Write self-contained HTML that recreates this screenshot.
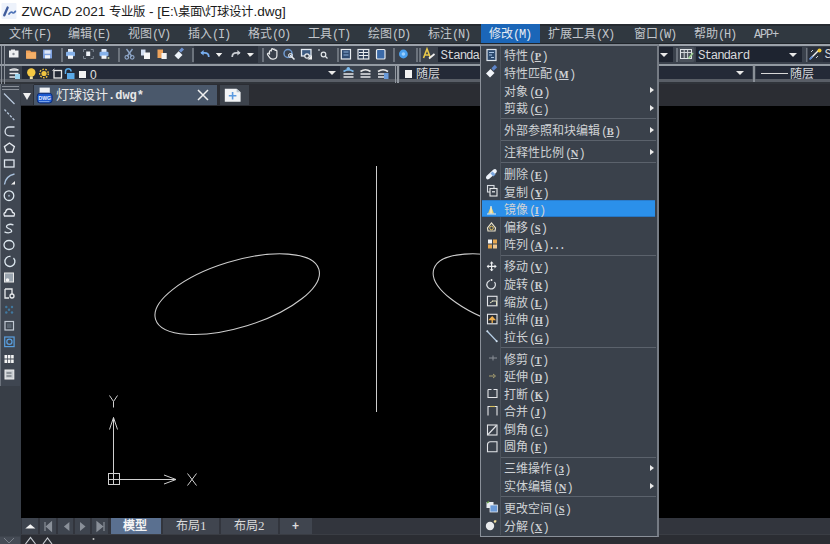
<!DOCTYPE html>
<html lang="zh-CN"><head><meta charset="utf-8"><style>
*{margin:0;padding:0;box-sizing:border-box}
html,body{width:830px;height:544px;overflow:hidden;background:#000;font-family:"Liberation Sans",sans-serif}
.a{position:absolute}
.mi{position:absolute;top:27px;font-size:12px;line-height:14px;color:#c2c6cb;white-space:nowrap}
.m{font-family:"Liberation Mono",monospace;font-size:12px;letter-spacing:-1.2px}
.it{position:absolute;left:503.5px;font-size:12px;line-height:14px;color:#cfd2d5;white-space:nowrap}
.u{text-decoration:underline;text-underline-offset:1px}
.it .m{margin-left:1.5px;letter-spacing:-1.8px}
.it .u{font-family:"Liberation Serif",serif;font-weight:bold;font-size:10.5px;letter-spacing:0;margin:0 0.3px}
.sep{position:absolute;left:501px;width:155px;height:1px;background:#5b626c}
.arr{position:absolute;left:650px;width:0;height:0;border-top:3.6px solid transparent;border-bottom:3.6px solid transparent;border-left:4.6px solid #ececec}
svg{position:absolute;overflow:visible}
</style></head><body>
<div class="a" style="left:0px;top:0px;width:830px;height:24px;background:#ffffff;"></div>
<svg style="left:0;top:0" width="24" height="24"><rect x="1.5" y="3" width="15" height="16" rx="1" fill="#edf2fb"/><path d="M4.3 15.3 L7.6 7.6" stroke="#3f5c9c" stroke-width="2.4" stroke-linecap="round"/><path d="M9 14 q2 -2.8 3.6 -1.3 q1.2 1 2.8 -1.4" stroke="#4d72b6" stroke-width="1.7" fill="none" stroke-linecap="round"/></svg>
<div class="a" style="left:21.5px;top:4px;font-size:13.6px;line-height:16px;color:#1a1a1a;white-space:nowrap">ZWCAD 2021 <span style="font-size:12.4px">专业版</span> - [E:\<span style="font-size:12.4px">桌面</span>\<span style="font-size:12.4px">灯球设计</span>.dwg]</div>
<div class="a" style="left:0px;top:24px;width:830px;height:20px;background:#303840;"></div>
<div class="a" style="left:0px;top:24px;width:830px;height:1.5px;background:#262b31;"></div>
<div class="a" style="left:0px;top:43px;width:830px;height:1px;background:#20252b;"></div>
<div class="a" style="left:480.5px;top:24.4px;width:59px;height:18.8px;background:#1b66b8;"></div>
<div class="mi" style="left:9px">文件<span class="m">(F)</span></div>
<div class="mi" style="left:68px">编辑<span class="m">(E)</span></div>
<div class="mi" style="left:128px">视图<span class="m">(V)</span></div>
<div class="mi" style="left:188px">插入<span class="m">(I)</span></div>
<div class="mi" style="left:248px">格式<span class="m">(O)</span></div>
<div class="mi" style="left:308px">工具<span class="m">(T)</span></div>
<div class="mi" style="left:368px">绘图<span class="m">(D)</span></div>
<div class="mi" style="left:428px">标注<span class="m">(N)</span></div>
<div class="mi" style="left:489px;color:#e6ebf2">修改<span class="m">(M)</span></div>
<div class="mi" style="left:548px">扩展工具<span class="m">(X)</span></div>
<div class="mi" style="left:634px">窗口<span class="m">(W)</span></div>
<div class="mi" style="left:694px">帮助<span class="m">(H)</span></div>
<div class="mi" style="left:754px"><span class="m">APP+</span></div>
<div class="a" style="left:0px;top:44px;width:830px;height:2px;background:#9ca2aa;"></div>
<div class="a" style="left:0px;top:46px;width:830px;height:18px;background:#3a414c;"></div>
<div class="a" style="left:0px;top:64px;width:830px;height:2px;background:#939aa2;"></div>
<div class="a" style="left:0px;top:66px;width:830px;height:14px;background:#3a414c;"></div>
<div class="a" style="left:0px;top:79.3px;width:830px;height:2.7px;background:#595e66;"></div>
<div class="a" style="left:0px;top:82px;width:830px;height:2px;background:#30343a;"></div>
<div class="a" style="left:1px;top:46px;width:1px;height:38px;background:#8c929b;"></div>
<div class="a" style="left:4px;top:46px;width:1px;height:38px;background:#8c929b;"></div>
<div class="a" style="left:61px;top:48px;width:2.4px;height:14px;background:#6c737d;"></div>
<div class="a" style="left:118px;top:48px;width:2.4px;height:14px;background:#6c737d;"></div>
<div class="a" style="left:192px;top:48px;width:2.4px;height:14px;background:#6c737d;"></div>
<div class="a" style="left:262px;top:48px;width:2.4px;height:14px;background:#6c737d;"></div>
<div class="a" style="left:337px;top:48px;width:2.4px;height:14px;background:#6c737d;"></div>
<div class="a" style="left:393px;top:48px;width:2.4px;height:14px;background:#6c737d;"></div>
<div class="a" style="left:416px;top:48px;width:2.4px;height:14px;background:#6c737d;"></div>
<div class="a" style="left:419px;top:48px;width:2.4px;height:14px;background:#6c737d;"></div>
<div class="a" style="left:676px;top:48px;width:2.4px;height:14px;background:#6c737d;"></div>
<div class="a" style="left:806px;top:48px;width:2.4px;height:14px;background:#6c737d;"></div>
<div class="a" style="left:194px;top:46px;width:64px;height:17px;background:#2a303b;"></div>
<div class="a" style="left:438px;top:47px;width:42px;height:15px;background:#1e2430;"></div>
<div class="a" style="left:440.5px;top:49px;font-family:'Liberation Mono',monospace;font-size:12.5px;letter-spacing:-1.1px;line-height:15px;color:#d6d8db">Standa</div>
<div class="a" style="left:659px;top:47px;width:14px;height:15px;background:#1e2430;"></div>
<div class="a" style="left:696px;top:47px;width:106px;height:15px;background:#1e2430;"></div>
<div class="a" style="left:698px;top:49px;font-family:'Liberation Mono',monospace;font-size:12.5px;letter-spacing:-1.1px;line-height:15px;color:#d6d8db">Standard</div>
<div class="a" style="left:659.5px;top:52.5px;width:0;height:0;border-left:4.0px solid transparent;border-right:4.0px solid transparent;border-top:4px solid #e8e8e8"></div>
<div class="a" style="left:789px;top:52.5px;width:0;height:0;border-left:4.0px solid transparent;border-right:4.0px solid transparent;border-top:4px solid #e8e8e8"></div>
<div class="a" style="left:215.5px;top:52.5px;width:0;height:0;border-left:3.5px solid transparent;border-right:3.5px solid transparent;border-top:4px solid #e8e8e8"></div>
<div class="a" style="left:247px;top:52.5px;width:0;height:0;border-left:3.5px solid transparent;border-right:3.5px solid transparent;border-top:4px solid #e8e8e8"></div>
<div class="a" style="left:22px;top:65.5px;width:318px;height:13.8px;background:#242a37;"></div>
<div class="a" style="left:400px;top:65.5px;width:352px;height:13.8px;background:#242a37;"></div>
<div class="a" style="left:756px;top:65.5px;width:74px;height:13.8px;background:#242a37;"></div>
<div class="a" style="left:753px;top:65px;width:2px;height:17px;background:#8a9098;"></div>
<div class="a" style="left:394.5px;top:65px;width:1.5px;height:18px;background:#9298a0;"></div>
<div class="a" style="left:397.2px;top:65px;width:1.5px;height:18px;background:#9298a0;"></div>
<div class="a" style="left:327.5px;top:70.5px;width:0;height:0;border-left:4.0px solid transparent;border-right:4.0px solid transparent;border-top:4px solid #e8e8e8"></div>
<div class="a" style="left:736px;top:70.5px;width:0;height:0;border-left:4.0px solid transparent;border-right:4.0px solid transparent;border-top:4px solid #e8e8e8"></div>
<div class="a" style="left:90px;top:67.5px;font-size:12px;line-height:15px;color:#e0e0e0">0</div>
<div class="a" style="left:79px;top:71px;width:7.2px;height:7.3px;background:#f2f2f2;"></div>
<div class="a" style="left:404.5px;top:70.3px;width:7.6px;height:7.6px;background:#f2f2f2;"></div>
<div class="a" style="left:416px;top:67px;font-size:12px;line-height:15px;color:#d6d8db">随层</div>
<div class="a" style="left:761px;top:73px;width:27px;height:1.2px;background:#d8d8d8;"></div>
<div class="a" style="left:790px;top:67px;font-size:12px;line-height:15px;color:#d6d8db">随层</div>
<div class="a" style="left:0px;top:84px;width:830px;height:21.5px;background:#2b2d33;"></div>
<div class="a" style="left:21px;top:84px;width:13px;height:21px;background:#3d434d;"></div>
<div class="a" style="left:33px;top:85px;width:1px;height:20px;background:#2a2f38;"></div>
<div class="a" style="left:34px;top:85px;width:183.4px;height:20px;background:#4a586b;"></div>
<div class="a" style="left:220px;top:85px;width:29px;height:20px;background:#3d434c;"></div>
<div class="a" style="left:23px;top:92.5px;width:0;height:0;border-left:4.25px solid transparent;border-right:4.25px solid transparent;border-top:7.5px solid #f0f0f0"></div>
<div class="a" style="left:56px;top:87px;font-size:13px;line-height:16px;color:#e8e8e8;white-space:nowrap">灯球设计<span style="font-family:'Liberation Mono',monospace;font-size:12px;font-weight:bold">.dwg*</span></div>
<svg style="left:196px;top:88px" width="14" height="14"><path d="M2 2 L12 12 M12 2 L2 12" stroke="#f0f0f0" stroke-width="1.5"/></svg>
<svg style="left:0;top:0" width="60" height="110"><rect x="39.6" y="87.6" width="10.2" height="5.4" fill="#f0f2f4"/><rect x="37.2" y="93.2" width="15" height="9.8" rx="3" fill="#1d5ad0" stroke="#102c70" stroke-width="1"/><text x="38.6" y="100" font-size="6.2" font-family="Liberation Sans" font-weight="bold" fill="#e8f0ff" textLength="12.5" lengthAdjust="spacingAndGlyphs">DWG</text><path d="M39 101.6 h10.5" stroke="#9cc0f0" stroke-width="0.8"/></svg>
<svg style="left:0;top:0" width="260" height="110"><path d="M224.8 88.8 h11.8 l4 3.4 v9.5 h-15.8z" fill="#f2f4f6"/><path d="M236.6 88.8 v3.4 h4" fill="#b8c4d0"/><path d="M232.6 92 v7.6 M228.8 95.8 h7.6" stroke="#5a9ae0" stroke-width="1.6"/></svg>
<div class="a" style="left:0px;top:84px;width:21px;height:460px;background:#383e47;"></div>
<div class="a" style="left:0px;top:84px;width:20px;height:302px;background:#3f4651;"></div>
<div class="a" style="left:0px;top:84px;width:1px;height:302px;background:#6b727c;"></div>
<div class="a" style="left:2px;top:86px;width:17px;height:1px;background:#8a9099;"></div>
<div class="a" style="left:2px;top:89px;width:17px;height:1px;background:#8a9099;"></div>
<div class="a" style="left:21px;top:105.5px;width:809px;height:412.5px;background:#000;"></div>
<svg style="left:0;top:0" width="830" height="544"><ellipse cx="237.2" cy="294.2" rx="85.4" ry="33.05" transform="rotate(-17.1 237.2 294.2)" fill="none" stroke="#cdcdcd" stroke-width="1.05"/><ellipse cx="515.4" cy="294.2" rx="85.4" ry="33.05" transform="rotate(17.1 515.4 294.2)" fill="none" stroke="#cdcdcd" stroke-width="1.05"/><path d="M376.5 166 V412" stroke="#cdcdcd" stroke-width="1"/><path d="M113.5 417.5 V473.5 M119 479.5 H176 M109.5 429.5 L113.5 417.5 L117.5 429.5 M164 475 L176 479.5 L164 484" stroke="#d0d0d0" stroke-width="1" fill="none"/><rect x="108.5" y="473.5" width="11" height="11" stroke="#d0d0d0" fill="none"/><path d="M113.5 473.5 V484.5 M108.5 479.5 H119.5" stroke="#d0d0d0"/><path d="M109.5 395.5 L113.5 401.5 L117.5 395.5 M113.5 401.5 V407.5" stroke="#d0d0d0" fill="none"/><path d="M187.5 473.5 L196.5 485.5 M196.5 473.5 L187.5 485.5" stroke="#d0d0d0" fill="none"/></svg>
<div class="a" style="left:21px;top:518px;width:809px;height:16px;background:#32353d;"></div>
<div class="a" style="left:21px;top:534px;width:809px;height:1px;background:#3a3d44;"></div>
<div class="a" style="left:21px;top:535px;width:809px;height:9px;background:#2b2d33;"></div>
<div class="a" style="left:21.7px;top:518px;width:16.6px;height:16px;background:#3e444e;"></div>
<div class="a" style="left:40px;top:518px;width:15.7px;height:16px;background:#3e444e;"></div>
<div class="a" style="left:57.5px;top:518px;width:15.5px;height:16px;background:#3e444e;"></div>
<div class="a" style="left:74.8px;top:518px;width:15.2px;height:16px;background:#3e444e;"></div>
<div class="a" style="left:92px;top:518px;width:16px;height:16px;background:#3e444e;"></div>
<div class="a" style="left:110.6px;top:518px;width:50px;height:16px;background:#5a7090;"></div>
<div class="a" style="left:163px;top:518px;width:56px;height:16px;background:#40454f;"></div>
<div class="a" style="left:220.5px;top:518px;width:57.5px;height:16px;background:#40454f;"></div>
<div class="a" style="left:279.7px;top:518px;width:32px;height:16px;background:#40454f;"></div>
<div class="a" style="left:123px;top:518px;font-size:12px;line-height:16px;color:#f4f4f4;font-weight:bold">模型</div>
<div class="a" style="left:176px;top:518px;font-size:12px;line-height:16px;color:#dcdcdc">布局<span style="font-family:'Liberation Serif',serif;font-size:13px">1</span></div>
<div class="a" style="left:234px;top:518px;font-size:12px;line-height:16px;color:#dcdcdc">布局<span style="font-family:'Liberation Serif',serif;font-size:13px">2</span></div>
<div class="a" style="left:292px;top:518px;font-size:12px;line-height:16px;color:#dcdcdc;font-weight:bold">+</div>
<svg style="left:0;top:0" width="830" height="544"><path d="M25.3 528.6 L30.3 524.3 L35.4 528.6z" fill="#f4f4f4"/><path d="M45 522 v9 M51.5 522 v9 l-5 -4.5z" stroke="#8a9099" fill="#8a9099" stroke-width="1.2"/><path d="M69.4 522 v9 l-5.5 -4.5z" fill="#8a9099"/><path d="M80 522 v9 l5.5 -4.5z" fill="#8a9099"/><path d="M97 522 v9 l5.5 -4.5z M104 522 v9" stroke="#8a9099" fill="#8a9099" stroke-width="1.2"/><path d="M25.5 544 l5 -6.5 l5 6.5 M43 544 l4.5 -6 l4.5 6" stroke="#c8ccd2" stroke-width="1.2" fill="none"/><circle cx="93.5" cy="539" r="1" fill="#c0c0c0"/><rect x="0" y="536.5" width="20" height="8" fill="#454b55"/><path d="M4 538 l5 5 l5 -5" stroke="#7a8089" fill="none"/></svg>
<svg style="left:0;top:0" width="830" height="100"><rect x="9" y="50.5" width="9.5" height="7" fill="#eef0f2"/><rect x="11" y="49.5" width="4" height="1.5" fill="#eef0f2"/><circle cx="13.5" cy="54" r="1.2" fill="#8a8f98"/><path d="M26 50.5 h4 l1.2 1.3 h5 v7 h-10.2z" fill="#f0a25a"/><rect x="26.5" y="53" width="9.5" height="5.5" fill="#f5b068"/><rect x="43" y="49.6" width="9" height="8.8" fill="#7fa2e0"/><rect x="44.5" y="50.3" width="6" height="3.4" fill="#dde6f6"/><rect x="45" y="55.2" width="5" height="3.2" fill="#f2f4f8"/><rect x="68" y="49" width="5" height="3" fill="#e4ecf8"/><rect x="66" y="51.8" width="9" height="4.4" rx="1" fill="#86b2ea"/><rect x="68" y="55.5" width="5" height="3.3" fill="#f4f6f8"/><rect x="101.5" y="49" width="5" height="3" fill="#e4ecf8"/><rect x="99.5" y="51.8" width="9" height="4.4" rx="1" fill="#86b2ea"/><rect x="101.5" y="55.5" width="5" height="3.3" fill="#f4f6f8"/><circle cx="108.5" cy="58" r="1" fill="#c0c8a0"/><path d="M83.5 52 v-2.5 h2.5 M90.8 49.5 h2.5 v2.5 M93.3 56 v2.5 h-2.5 M86 58.5 h-2.5 v-2.5" stroke="#7f8894" fill="none"/><rect x="86.2" y="51.5" width="4" height="4.5" fill="#eef2f8"/><path d="M126.5 49 L132 56.5 M132.5 49 L127 56.5" stroke="#8ea6c8" stroke-width="1.3"/><circle cx="126.8" cy="57.3" r="1.8" stroke="#8ea6c8" stroke-width="1.2" fill="none"/><circle cx="132.2" cy="57.3" r="1.8" stroke="#8ea6c8" stroke-width="1.2" fill="none"/><rect x="141" y="49.5" width="4.5" height="6" fill="#d4e0f2"/><rect x="144" y="52.5" width="6" height="6.5" fill="#f6f6f6"/><rect x="157.5" y="49.5" width="5.5" height="8.5" fill="#eea35c"/><rect x="161.5" y="53" width="5.2" height="6" fill="#f4f4f4"/><path d="M174.5 55.5 l4.2 -4.2 l3.8 3.8 l-4.2 4.2 z" fill="#eef3fa"/><path d="M180 51.5 l3 -3" stroke="#6f93d0" stroke-width="3"/><path d="M208.8 57 q0 -4.2 -4.2 -4.2 h-3.6" stroke="#78aef0" stroke-width="1.7" fill="none"/><path d="M200.4 52.8 l3.2 -2.8 v5.6z" fill="#78aef0"/><path d="M232.2 57 q0 -4.2 4.2 -4.2 h3.6" stroke="#c8ccd2" stroke-width="1.7" fill="none"/><path d="M240.6 52.8 l-3.2 -2.8 v5.6z" fill="#c8ccd2"/><path d="M216 53.2 h6.3 l-3.15 2.9z M247.8 53.2 h6.3 l-3.15 2.9z" fill="#f0f0f0"/><path d="M269.5 54.5 v-3 q0 -1 1 -1 q0.8 0 0.8 1 v-1.8 q0 -1 1 -1 q0.9 0 0.9 1 v0.3 q0 -1 1 -1 q0.9 0 0.9 1 v1 q0 -0.9 0.9 -0.9 q0.9 0 0.9 1 v4.5 q0 3.5 -3.5 3.5 h-0.8 q-2.2 0 -3.3 -2 l-1.7 -2.5 q-0.5 -0.9 0.4 -1.3 q0.7 -0.3 1.2 0.4z" stroke="#e8eaec" stroke-width="1.2" fill="#3a414c"/><circle cx="288" cy="53.5" r="4" stroke="#6f9ad0" stroke-width="1.5" fill="none"/><path d="M290 55 l4.5 4.5" stroke="#e8ecf0" stroke-width="1.5"/><circle cx="290.5" cy="55.5" r="2" stroke="#e8ecf0" fill="none"/><rect x="301.5" y="49.5" width="9.5" height="6.5" stroke="#e4eaf2" stroke-width="1.3" fill="#3d5a80"/><circle cx="307" cy="56" r="2.2" stroke="#e8ecf0" stroke-width="1.2" fill="#3a414c"/><path d="M312 55 v4.5 h-4.5z" fill="#f2f2f2"/><circle cx="319" cy="50" r="1" fill="#aab0b8"/><circle cx="323.5" cy="54.5" r="2.3" stroke="#e2e6ea" stroke-width="1.2" fill="none"/><path d="M325 56 l2.5 2.5" stroke="#e2e6ea" stroke-width="1.3"/><rect x="341.3" y="49.5" width="9.2" height="9.5" stroke="#e8ecf0" stroke-width="1.2" fill="#2f4a70"/><path d="M343.5 52 h5 M343.5 55 h5" stroke="#8fb0d8"/><rect x="358" y="49.5" width="10.8" height="9.5" stroke="#e8ecf0" stroke-width="1.2" fill="#2f3f58"/><path d="M363.4 49.5 v9.5 M359 52.5 h9 M359 55.5 h9" stroke="#e8ecf0"/><rect x="376.5" y="49.5" width="8.5" height="9.5" rx="1" stroke="#e8ecf0" stroke-width="1.2" fill="#3b6aa8"/><circle cx="403.4" cy="54" r="4.4" fill="#4aa0f0"/><circle cx="403.4" cy="54" r="1.8" fill="#9ad0ff"/><path d="M423.5 58 l3.5 -9 l3.5 9 M425 55 h4" stroke="#e8c84a" stroke-width="1.6" fill="none"/><path d="M429 58.5 l5.5 -4.5" stroke="#f0f0f0" stroke-width="1.8"/><rect x="678.5" y="47" width="16" height="15" rx="2" fill="#4a515b"/><rect x="680.5" y="49.5" width="11" height="9" fill="none" stroke="#e0e4e8"/><path d="M681 52.5 h10 M684.2 50 v8 M687.6 50 v8" stroke="#d0d4d8"/><path d="M688.5 58.5 l4.5 -5.5" stroke="#9ad090" stroke-width="1.6"/><rect x="807.5" y="47" width="15.5" height="15" fill="#2a303b"/><path d="M810 59 l9 -9" stroke="#f0f0f0" stroke-width="1.4"/><circle cx="819.5" cy="50.5" r="2" fill="#f0c838"/><path d="M809.5 59.5 l3 -3" stroke="#5a8ad8" stroke-width="1.6"/><path d="M811 52 l2 -2 M816 58 l2 -2" stroke="#c8ccd0"/><rect x="823" y="47" width="7" height="15" fill="#242a37"/><text x="824.5" y="58" font-family="Liberation Mono" font-size="12.5" fill="#d6d8db">S</text><path d="M9.5 70 h9 M9.5 73.5 h9 M9.5 77 h6" stroke="#e6e8ea" stroke-width="1.6"/><rect x="15" y="74" width="5" height="5" fill="#9ad2ec"/><path d="M10 70 q4.5 -2.5 8 0" stroke="#e6e8ea" fill="none" stroke-width="1.2"/><circle cx="31.3" cy="72.5" r="4.2" fill="#f5c842"/><rect x="29.8" y="76.5" width="3" height="2.5" fill="#f0e0a0"/><circle cx="44" cy="73.5" r="2.6" fill="#f0c440"/><circle cx="44" cy="73.5" r="4.3" stroke="#f0c440" stroke-width="1.4" stroke-dasharray="1.6 1.4" fill="none"/><rect x="54" y="70.5" width="7.5" height="7.5" stroke="#e8e8e8" stroke-width="1.3" fill="none"/><path d="M52.5 70.5 l2 -1.5" stroke="#e8e8e8"/><rect x="67" y="73" width="7.5" height="6" fill="#5aaae8"/><path d="M65.5 74 v-2.5 a2.8 2.8 0 0 1 5.6 0" stroke="#5aaae8" stroke-width="1.5" fill="none"/><path d="M343.5 74 h10 M343.5 77 h10" stroke="#e6e8ea" stroke-width="1.6"/><path d="M343.5 71.5 q5 -3.5 10 0" stroke="#7ab8ec" fill="none" stroke-width="1.6"/><path d="M360.5 74 h10 M360.5 77 h10" stroke="#e6e8ea" stroke-width="1.6"/><path d="M360.5 71.5 q5 -3.5 10 0" stroke="#e8e8e8" fill="none" stroke-width="1.6"/><path d="M378 74 h10 M378 77 h10" stroke="#e6e8ea" stroke-width="1.6"/><path d="M378 71.5 q5 -3.5 10 0" stroke="#e8e8e8" fill="none" stroke-width="1.6"/><circle cx="348.3" cy="68.8" r="1.8" fill="#7ab8ec"/><rect x="384" y="73" width="4.5" height="6" fill="#6a9ad8"/></svg>
<svg style="left:0;top:0" width="30" height="400"><path d="M4 93.5 L14.5 104" stroke="#b8c8dc" stroke-width="1.3"/><path d="M4.5 109.5 L14.5 120.3" stroke="#b8c8dc" stroke-width="1.3" stroke-dasharray="2.5 1.5"/><path d="M14.5 127 h-5 a4.4 4.4 0 0 0 0 8.8 h5" stroke="#d8e0ea" stroke-width="1.3" fill="none"/><path d="M9.4 143 L14.4 146.6 L12.5 152 H6.3 L4.4 146.6 Z" stroke="#e4e8ee" stroke-width="1.3" fill="none"/><rect x="4.5" y="160" width="9.5" height="7" stroke="#dfe6ee" stroke-width="1.3" fill="none"/><path d="M4.5 184.5 Q5.5 176 14.5 174" stroke="#a8c0dc" stroke-width="1.4" fill="none"/><path d="M11 184.5 l4 -3.5 v3.5z" fill="#f0f0f0"/><circle cx="9" cy="195.7" r="4.8" stroke="#dde8f0" stroke-width="1.3" fill="none"/><circle cx="9" cy="195.7" r="1" fill="#9ab"/><path d="M4.5 216 h9.5 q1.5 -3 -1.5 -3.5 q-0.5 -3.5 -3.5 -3.5 q-3 0 -3.5 3.5 q-2.5 0.5 -1 3.5z" stroke="#e4e8ee" stroke-width="1.3" fill="none"/><path d="M13.5 225 q-3 -1.5 -6 0 q-2.5 2 1 3.5 q4 1.5 3 3.3 q-3 2 -7 0" stroke="#dde6ee" stroke-width="1.3" fill="none"/><ellipse cx="9" cy="245" rx="5" ry="4.5" stroke="#dde8f0" stroke-width="1.3" fill="none"/><path d="M13.5 258 a5 5 0 1 1 -3 -1.5" stroke="#dde8f0" stroke-width="1.3" fill="none"/><rect x="4.5" y="273" width="9" height="9" fill="#9aa4ae" stroke="#e8e8e8"/><circle cx="7.5" cy="280" r="1.8" fill="#f4f4f4"/><path d="M5 289 h7 v5 M5 289 v9 h4" stroke="#e8eaec" stroke-width="1.3" fill="none"/><circle cx="12" cy="296" r="2" stroke="#e8eaec" stroke-width="1.3" fill="none"/><g fill="#4079a0"><circle cx="6.3" cy="307" r="1.2"/><circle cx="12" cy="307" r="1.2"/><circle cx="9" cy="309.7" r="1.2"/><circle cx="6.3" cy="312.5" r="1.2"/><circle cx="12" cy="312.5" r="1.2"/></g><rect x="5" y="321.5" width="8.5" height="8.5" stroke="#c0c8d2" stroke-width="1.2" fill="none"/><rect x="7" y="323.5" width="4.5" height="4.5" fill="#5a6470"/><rect x="4.7" y="337" width="9.4" height="9.6" stroke="#5aa0e0" stroke-width="1.2" fill="none"/><circle cx="9.4" cy="341.8" r="2.6" stroke="#5aa0e0" stroke-width="1.2" fill="none"/><g fill="#f4f4f4"><rect x="4.5" y="355" width="2.6" height="3.5"/><rect x="7.8" y="355" width="2.6" height="3.5"/><rect x="11.1" y="355" width="2.6" height="3.5"/><rect x="4.5" y="359.5" width="2.6" height="3.5"/><rect x="7.8" y="359.5" width="2.6" height="3.5"/><rect x="11.1" y="359.5" width="2.6" height="3.5"/></g><rect x="5" y="370" width="8.8" height="9" fill="#c8ccd0" stroke="#f0f0f0"/><path d="M6.5 373 h5 M6.5 376 h5" stroke="#505860"/></svg>
<div class="a" style="left:480px;top:44px;width:179px;height:493px;background:#3a414b;border:1px solid #8a9099;border-top:2px solid #7f868f;border-right:2px solid #757b84"></div>
<div class="a" style="left:500px;top:46px;width:1px;height:489px;background:#4d545e;"></div>
<div class="it" style="top:49.4px">特性<span class="m">(<span class="u">P</span>)</span></div>
<div class="it" style="top:66.9px">特性匹配<span class="m">(<span class="u">M</span>)</span></div>
<div class="it" style="top:84.5px">对象<span class="m">(<span class="u">O</span>)</span></div>
<div class="arr" style="top:87.2px"></div>
<div class="it" style="top:102.0px">剪裁<span class="m">(<span class="u">C</span>)</span></div>
<div class="arr" style="top:104.8px"></div>
<div class="sep" style="top:118.1px"></div>
<div class="it" style="top:124.1px">外部参照和块编辑<span class="m">(<span class="u">B</span>)</span></div>
<div class="arr" style="top:126.9px"></div>
<div class="sep" style="top:140.2px"></div>
<div class="it" style="top:146.1px">注释性比例<span class="m">(<span class="u">N</span>)</span></div>
<div class="arr" style="top:148.9px"></div>
<div class="sep" style="top:162.3px"></div>
<div class="it" style="top:168.2px">删除<span class="m">(<span class="u">E</span>)</span></div>
<div class="it" style="top:185.7px">复制<span class="m">(<span class="u">Y</span>)</span></div>
<div class="a" style="left:481.8px;top:200.3px;width:173.6px;height:17px;background:#2b90ea;border-top:1px solid #2a7ccc;border-bottom:1px solid #2676c4"></div>
<div class="it" style="top:203.3px">镜像<span class="m">(<span class="u">I</span>)</span></div>
<div class="it" style="top:220.8px">偏移<span class="m">(<span class="u">S</span>)</span></div>
<div class="it" style="top:238.4px">阵列<span class="m">(<span class="u">A</span>)...</span></div>
<div class="sep" style="top:254.5px"></div>
<div class="it" style="top:260.4px">移动<span class="m">(<span class="u">V</span>)</span></div>
<div class="it" style="top:278.0px">旋转<span class="m">(<span class="u">R</span>)</span></div>
<div class="it" style="top:295.5px">缩放<span class="m">(<span class="u">L</span>)</span></div>
<div class="it" style="top:313.0px">拉伸<span class="m">(<span class="u">H</span>)</span></div>
<div class="it" style="top:330.6px">拉长<span class="m">(<span class="u">G</span>)</span></div>
<div class="sep" style="top:346.7px"></div>
<div class="it" style="top:352.7px">修剪<span class="m">(<span class="u">T</span>)</span></div>
<div class="it" style="top:370.2px">延伸<span class="m">(<span class="u">D</span>)</span></div>
<div class="it" style="top:387.7px">打断<span class="m">(<span class="u">K</span>)</span></div>
<div class="it" style="top:405.3px">合并<span class="m">(<span class="u">J</span>)</span></div>
<div class="it" style="top:422.8px">倒角<span class="m">(<span class="u">C</span>)</span></div>
<div class="it" style="top:440.4px">圆角<span class="m">(<span class="u">F</span>)</span></div>
<div class="sep" style="top:456.5px"></div>
<div class="it" style="top:462.4px">三维操作<span class="m">(<span class="u">3</span>)</span></div>
<div class="arr" style="top:465.2px"></div>
<div class="it" style="top:480.0px">实体编辑<span class="m">(<span class="u">N</span>)</span></div>
<div class="arr" style="top:482.8px"></div>
<div class="sep" style="top:496.1px"></div>
<div class="it" style="top:502.0px">更改空间<span class="m">(<span class="u">S</span>)</span></div>
<div class="it" style="top:519.6px">分解<span class="m">(<span class="u">X</span>)</span></div>
<svg style="left:0;top:0" width="830" height="544"><rect x="487" y="49.5" width="9" height="11" stroke="#dfe6ee" stroke-width="1.2" fill="#2c4a6e"/><path d="M489 52.5 h5 M489 55 h3 M491 57.5 h3" stroke="#a8c4e4" stroke-width="1"/><path d="M486 73.5 l4.5 -4.5 l4 4 l-4.5 4.5z" fill="#f2f5fa"/><path d="M492.5 69.5 l3.5 -3.5" stroke="#5d84c8" stroke-width="3.2"/><path d="M486.5 176 l7 -6.5 q1.8 -1 3 0.5 q1 1.5 -0.5 3 l-7 6 q-1.5 1 -2.6 -0.2 q-1 -1.4 0.1 -2.8z" fill="#eef3fa"/><path d="M491.5 172.5 l3 3" stroke="#7aa6de" stroke-width="3"/><rect x="487.5" y="185.5" width="6.5" height="6.5" stroke="#d8dce2" stroke-width="1.1" fill="none"/><rect x="490" y="188.5" width="7" height="7.5" stroke="#e8eaec" stroke-width="1.1" fill="#3a414b"/><rect x="492" y="191" width="3" height="1.5" fill="#c8ccd0"/><path d="M488 213.5 l3 -7.5 l3 7.5z" fill="#e8d070"/><path d="M491 206 v7.5" stroke="#f8f8f8" stroke-width="1"/><path d="M487 214 h9" stroke="#f0f0f0"/><path d="M488 231 l-0.5 -3 l4 -5 l4 5 l-0.5 3z" stroke="#e8e0c8" stroke-width="1.2" fill="none"/><circle cx="491.5" cy="228" r="1.8" stroke="#e0c060" stroke-width="1" fill="none"/><rect x="488" y="239.5" width="4" height="4" fill="#f4f4f4"/><rect x="493" y="239.5" width="4" height="4" fill="#e8a850"/><rect x="488" y="244.5" width="4" height="4" fill="#e8a850"/><rect x="493" y="244.5" width="4" height="4" fill="#f0c890"/><path d="M491.6 261.8 v9.2 M487 266.4 h9.2" stroke="#eceef0" stroke-width="1.2"/><path d="M491.6 261.5 l-2 2 h4z M491.6 271.3 l-2 -2 h4z M486.7 266.4 l2 -2 v4z M496.5 266.4 l-2 -2 v4z" fill="#eceef0"/><path d="M490 280.5 a4.3 4.3 0 1 0 4.5 1.5" stroke="#e0e4e8" stroke-width="1.2" fill="none"/><circle cx="491.5" cy="280" r="1" fill="#f0f0f0"/><rect x="487.5" y="296.3" width="9.5" height="9.5" stroke="#e4e6ea" stroke-width="1.1" fill="none"/><path d="M492 301 h4.5 v4.5 M490 303 l3 -2" stroke="#e0e0c0" stroke-width="1" fill="none"/><rect x="487.5" y="314.3" width="9.5" height="9.5" stroke="#e4e6ea" stroke-width="1.1" fill="#2a2e34"/><path d="M492.2 323 v-5 M489.8 319.5 l2.4 -2.6 l2.4 2.6z" stroke="#f0b050" stroke-width="1.3" fill="#f0b050"/><path d="M487 331 L497 341.5" stroke="#b8d0e8" stroke-width="1.2"/><circle cx="487.3" cy="331.3" r="1" fill="#d0e0f0"/><circle cx="496.7" cy="341.2" r="1" fill="#d0e0f0"/><path d="M489 358 h8 M493 355.5 v5" stroke="#8a9098" stroke-width="1"/><path d="M489 376 h5 M493 374 l2.5 2 l-2.5 2" stroke="#a8a070" stroke-width="1" fill="none"/><path d="M488 389.5 h3.5 M493.5 389.5 h3.5 v8 h-9 v-8" stroke="#e4e6ea" stroke-width="1.1" fill="none"/><path d="M488 415.5 v-9 h3 M494 406.5 h3 v9" stroke="#e4e6ea" stroke-width="1.1" fill="none"/><path d="M490 406.5 h5" stroke="#d8c060" stroke-width="1.1"/><rect x="487.5" y="425" width="9.5" height="10" stroke="#e4e6ea" stroke-width="1.1" fill="none"/><path d="M488 434.5 l8.5 -9" stroke="#e4e6ea" stroke-width="1.1"/><path d="M490.5 441.8 h6.5 v10 h-9.5 v-7 q0 -3 3 -3z" stroke="#e4e6ea" stroke-width="1.1" fill="none"/><rect x="486.5" y="502" width="7" height="6" fill="#e8ecf0"/><rect x="490" y="505" width="7.5" height="7" fill="#6a9ad8" stroke="#e0e6ee" stroke-width="0.8"/><path d="M487 503 l2 -1.5" stroke="#60a040" stroke-width="1.5"/><circle cx="490" cy="526" r="4.2" fill="#e8eaec"/><path d="M494.5 521 l2 -1 l-0.5 2.2z" fill="#e0c070"/><circle cx="495" cy="521.5" r="1.2" fill="#f0e0a0"/></svg>
</body></html>
